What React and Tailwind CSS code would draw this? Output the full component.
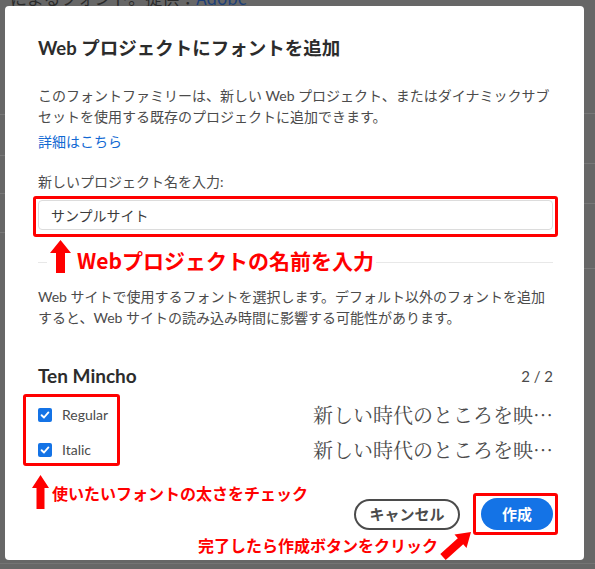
import React from "react";

const SANS = { fontFamily: 'Lato, "Noto Sans CJK JP", "Noto Sans", sans-serif' };
const CJK = { fontFamily: '"Noto Sans CJK JP", "Noto Sans", sans-serif' };
const SERIF = { fontFamily: '"Noto Serif CJK JP", "Noto Sans CJK JP", serif' };

function Check() {
  return (
    <span className="flex h-[14px] w-[14px] items-center justify-center rounded-[2px] bg-[#1473e6]">
      <svg width="10" height="10" viewBox="0 0 10 10">
        <path d="M1.6 5.2 L4 7.5 L8.4 2.4" fill="none" stroke="#fff" strokeWidth="1.9" strokeLinecap="round" strokeLinejoin="round" />
      </svg>
    </span>
  );
}

function Row({ label }) {
  return (
    <div className="flex h-[35px] items-center justify-between">
      <div className="flex items-center gap-[10px]">
        <Check />
        <span className="text-[14px] text-[#4b4b4b]">{label}</span>
      </div>
      <span className="text-[20px] leading-[28px] text-[#4b4b4b]" style={SERIF}>
        新しい時代のところを映…
      </span>
    </div>
  );
}

function UpArrow({ w, h, head, shaft }) {
  const c = w / 2;
  const s = shaft / 2;
  return (
    <svg width={w} height={h} viewBox={`0 0 ${w} ${h}`}>
      <polygon
        points={`${c},0 ${w},${head} ${c + s},${head} ${c + s},${h} ${c - s},${h} ${c - s},${head} 0,${head}`}
        fill="#ff0000"
      />
    </svg>
  );
}

export default function App() {
  return (
    <div className="relative h-[569px] w-[595px] overflow-hidden bg-[#676767]" style={SANS}>
      {/* underlying page seen through the overlay */}
      <div className="absolute left-[10px] top-[-12px] text-[17px] leading-[20px] text-[#2b2b2b]" style={CJK}>
        によるフォント。提供：<span className="text-[#1c3f78]">Adobe</span>
      </div>
      <div className="absolute left-0 top-[114px] h-px w-[5px] bg-[#787878]" />
      <div className="absolute left-0 top-[155px] h-px w-[5px] bg-[#787878]" />
      <div className="absolute left-0 top-[193px] h-px w-[5px] bg-[#787878]" />
      <div className="absolute left-0 top-[232px] h-px w-[5px] bg-[#787878]" />
      <div className="absolute right-0 top-[113px] h-px w-[11px] bg-[#787878]" />
      <div className="absolute right-0 top-[163px] h-px w-[11px] bg-[#787878]" />
      <div className="absolute right-0 top-[203px] h-px w-[11px] bg-[#787878]" />
      <div className="absolute right-0 top-[268px] h-px w-[11px] bg-[#787878]" />
      <div className="absolute left-0 top-[563px] h-px w-full bg-[#747474]" />

      {/* dialog */}
      <div className="absolute left-[5px] top-[6px] flex h-[554px] w-[579px] flex-col rounded-[4px] bg-white pb-[30px] pl-[33px] pr-[31px] pt-[30px]">
        <h1 className="text-[18.5px] font-bold leading-[24px] text-[#2c2c2c]">
          Web プロジェクトにフォントを追加
        </h1>
        <p className="mt-[25px] text-[14px] leading-[21px] text-[#4b4b4b]">
          このフォントファミリーは、新しい Web プロジェクト、またはダイナミックサブ
          <br />
          セットを使用する既存のプロジェクトに追加できます。
        </p>
        <div className="mt-[4px] text-[14px] leading-[21px] text-[#1269d3]">詳細はこちら</div>
        <div className="mt-[19px] text-[14px] leading-[21px] text-[#4b4b4b]">新しいプロジェクト名を入力:</div>
        <div className="mt-[8px] flex h-[31px] items-center rounded-[4px] border border-[#dcdcdc] pl-[12px] text-[14px] text-[#3b3b3b]">
          サンプルサイト
        </div>
        <div className="mt-[32px] h-px bg-[#e8e8e8]" />
        <p className="mt-[23px] text-[14px] leading-[21px] text-[#4b4b4b]">
          Web サイトで使用するフォントを選択します。デフォルト以外のフォントを追加
          <br />
          すると、Web サイトの読み込み時間に影響する可能性があります。
        </p>
        <div className="mt-[35px] flex h-[26px] items-center justify-between">
          <span className="text-[19px] font-bold text-[#2c2c2c]">Ten Mincho</span>
          <span className="text-[15px] text-[#4b4b4b]">2 / 2</span>
        </div>
        <div className="mt-[8px] flex flex-col">
          <Row label="Regular" />
          <Row label="Italic" />
        </div>
        <div className="mt-[31px] flex items-center justify-end gap-[21px]" style={CJK}>
          <button className="flex h-[31px] w-[106px] items-center justify-center rounded-full border-2 border-[#4b4b4b] text-[15px] font-bold text-[#4b4b4b]">
            キャンセル
          </button>
          <button className="flex h-[32px] w-[72px] items-center justify-center rounded-full bg-[#1473e6] text-[15px] font-bold text-white">
            作成
          </button>
        </div>

        {/* annotations */}
        <div className="absolute left-[28px] top-[190px] h-[41px] w-[525px] rounded-[3px] border-[3px] border-[#ff0000]" />
        <div className="absolute left-[42px] top-[234px] flex items-start gap-[6px] bg-white pl-[3px] pr-[2px]" style={CJK}>
          <UpArrow w={21} h={33} head={13} shaft={9} />
          <span className="mt-[6px] text-[21px] font-bold leading-[28px] text-[#ff0000]">Webプロジェクトの名前を入力</span>
        </div>

        <div className="absolute left-[18px] top-[388px] h-[72px] w-[97px] rounded-[3px] border-[3px] border-[#ff0000]" />
        <div className="absolute left-[27px] top-[469px]">
          <UpArrow w={17} h={34} head={13} shaft={8} />
        </div>
        <div className="absolute left-[47px] top-[476px] text-[16px] font-bold leading-[22px] text-[#ff0000]" style={CJK}>
          使いたいフォントの太さをチェック
        </div>

        <div className="absolute left-[468px] top-[487px] h-[42px] w-[85px] rounded-[3px] border-[3px] border-[#ff0000]" />
        <div className="absolute left-[193px] top-[528px] text-[16px] font-bold leading-[22px] text-[#ff0000]" style={CJK}>
          完了したら作成ボタンをクリック
        </div>
        <svg className="absolute left-[433px] top-[522px]" width="36" height="36" viewBox="0 0 36 36">
          <polygon points="33,4 28.5,20 25.2,16.3 7.7,32 2.3,26 19.8,10.3 16.5,6.6" fill="#ff0000" />
        </svg>
      </div>
    </div>
  );
}
